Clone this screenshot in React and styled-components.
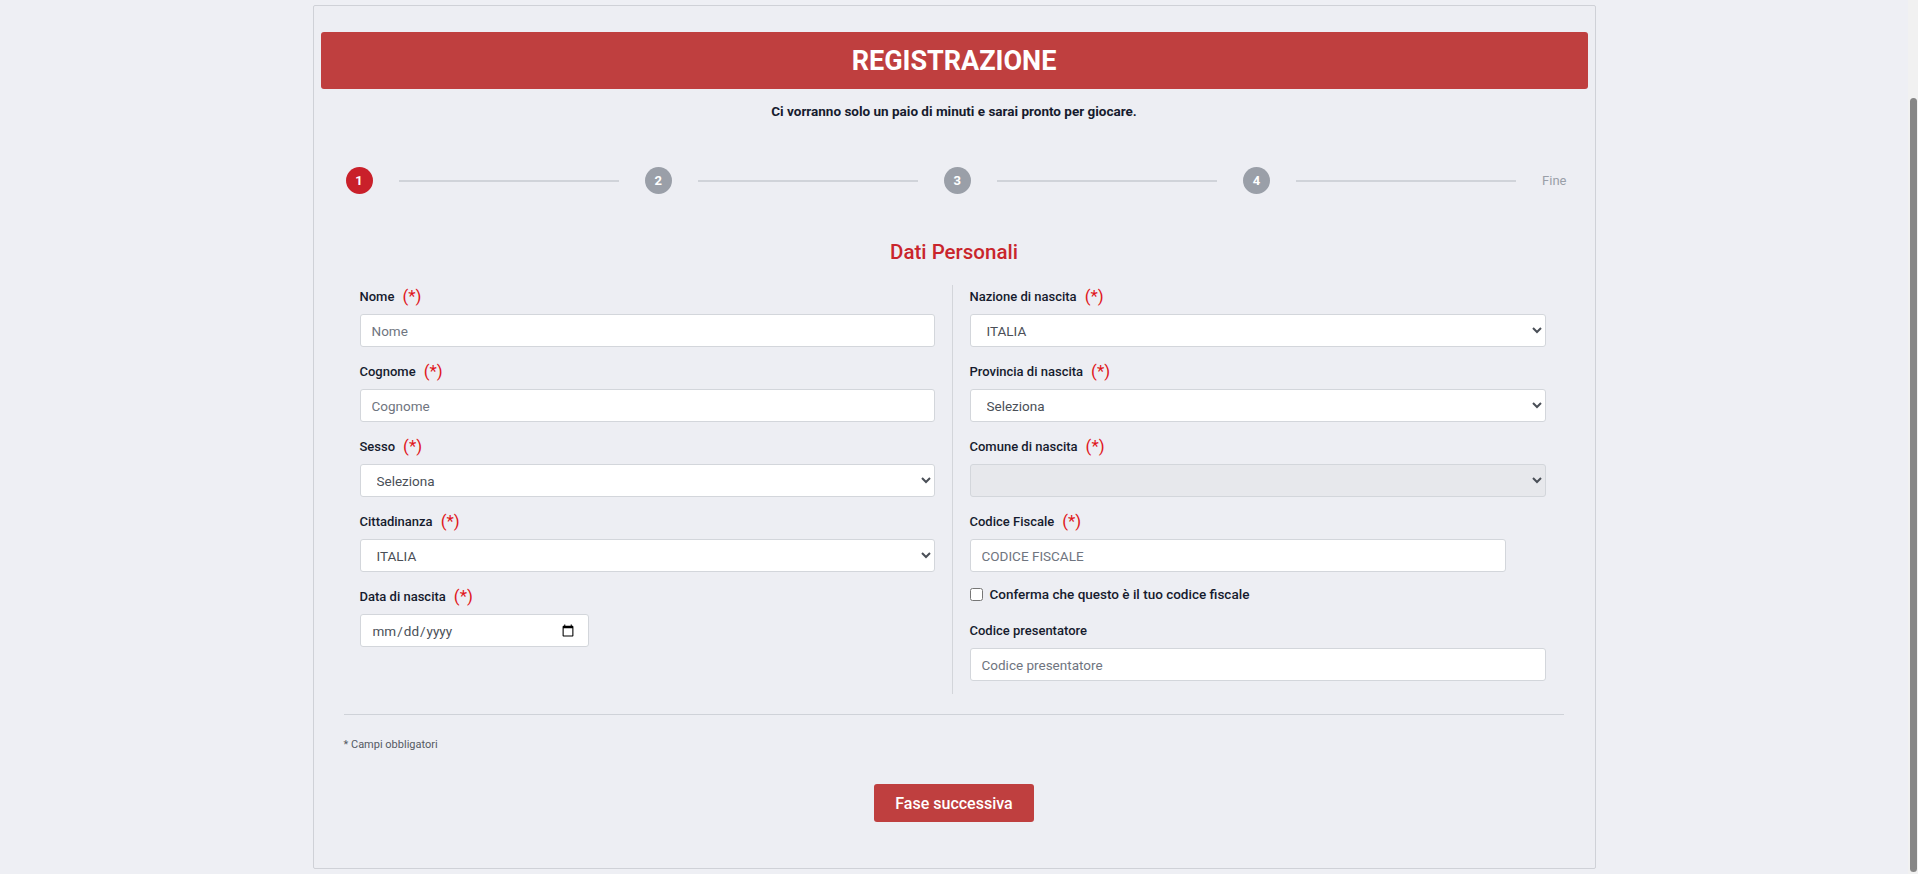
import React from 'react'
import styled, { createGlobalStyle } from 'styled-components'

const GlobalStyle = createGlobalStyle`
  body {
    margin: 0;
    padding-right: 10px;
    background: #eeeff4;
    font-family: Roboto, "Liberation Sans", sans-serif;
    color: #161b2e;
  }
  * {
    box-sizing: border-box;
  }
`

const ScrollTrack = styled.div`
  position: fixed;
  top: 0;
  right: 0;
  width: 10px;
  height: 100vh;
  background: #f1f1f1;
`

const ScrollThumb = styled.div`
  position: absolute;
  top: 98px;
  bottom: 2px;
  left: 2px;
  right: 1px;
  border-radius: 4px;
  background: #868686;
`

const Card = styled.div`
  width: 1283px;
  margin: 5px auto 6px;
  background: #edeef3;
  border: 1px solid #cfd1d7;
  border-radius: 2px;
  padding: 26px 7px 46px;
`

const Header = styled.div`
  height: 57px;
  background: #bf3f3f;
  border-radius: 3px;
  display: flex;
  align-items: center;
  justify-content: center;
  color: #fff;
  font-size: 27px;
  font-weight: 700;
`

const Subtitle = styled.div`
  margin-top: 12px;
  line-height: 20px;
  text-align: center;
  font-size: 13.5px;
  font-weight: 700;
  color: #161b2e;
`

const Steps = styled.div`
  display: flex;
  align-items: center;
  margin: 46px 21px 0 25px;
`

const StepDot = styled.div`
  width: 27px;
  height: 27px;
  border-radius: 50%;
  flex: none;
  display: flex;
  align-items: center;
  justify-content: center;
  background: ${p => (p.$active ? '#c9202a' : '#9a9fa8')};
  color: #fff;
  font-size: 13px;
  font-weight: 700;
`

const StepLine = styled.div`
  flex: 1;
  height: 2px;
  margin: 0 26px;
  background: #d0d3d9;
`

const StepEnd = styled.div`
  font-size: 13px;
  color: #9a9fa8;
`

const SectionTitle = styled.h2`
  margin: 46px 0 0;
  line-height: 24px;
  text-align: center;
  font-size: 20.5px;
  font-weight: 500;
  color: #c9252c;
`

const FormGrid = styled.div`
  display: grid;
  grid-template-columns: 575px 1px 576px;
  column-gap: 17px;
  margin: 21px 0 0 39px;
`

const Column = styled.div`
  padding-bottom: 13px;
`

const Divider = styled.div`
  background: #d3d5da;
`

const Field = styled.div`
  margin-bottom: ${p => (p.$tight ? '0' : '13px')};
`

const Label = styled.label`
  display: flex;
  align-items: center;
  gap: 8px;
  height: 22px;
  margin-bottom: 7px;
  margin-top: ${p => p.$gap || '0'};
  font-size: 13px;
  font-weight: 500;
  color: #161b2e;
`

const Required = styled.span`
  font-size: 17px;
  font-weight: 400;
  color: #e0161b;
`

const Input = styled.input`
  display: block;
  width: ${p => p.$width || '100%'};
  height: 33px;
  padding: 0 11px;
  background: #fff;
  border: 1px solid #d3d6db;
  border-radius: 3px;
  font-family: Roboto, "Liberation Sans", sans-serif;
  font-size: 13.5px;
  color: #4a4f57;

  &::placeholder {
    color: #6f7580;
  }
`

const Select = styled.select`
  display: block;
  width: 100%;
  height: 33px;
  padding: 0 11px 0 12px;
  background: ${p => (p.disabled ? '#e7e8ec' : '#fff')};
  border: 1px solid #d3d6db;
  border-radius: 3px;
  font-family: Roboto, "Liberation Sans", sans-serif;
  font-size: 13.5px;
  color: #4a4f57;
  opacity: 1;
`

const CheckRow = styled.label`
  display: flex;
  align-items: center;
  gap: 7px;
  height: 18px;
  margin-top: 13px;
  font-size: 13.5px;
  font-weight: 500;
  color: #161b2e;

  input {
    margin: 0;
    width: 13px;
    height: 13px;
  }
`

const Separator = styled.hr`
  margin: 20px 24px 0 23px;
  border: 0;
  border-top: 1px solid #cfd2d8;
`

const Note = styled.div`
  margin: 23px 0 0 23px;
  line-height: 14px;
  font-size: 11px;
  color: #555a63;
`

const Actions = styled.div`
  display: flex;
  justify-content: center;
  margin-top: 32px;
`

const Button = styled.button`
  width: 160px;
  height: 38px;
  background: #bf3f3f;
  border: 0;
  border-radius: 3px;
  color: #fff;
  font-family: Roboto, "Liberation Sans", sans-serif;
  font-size: 16px;
  font-weight: 500;
`

function Req({ children, gap }) {
  return (
    <Label $gap={gap}>
      {children}
      <Required>(*)</Required>
    </Label>
  )
}

export default function App() {
  return (
    <>
      <GlobalStyle />
      <Card>
        <Header>REGISTRAZIONE</Header>
        <Subtitle>Ci vorranno solo un paio di minuti e sarai pronto per giocare.</Subtitle>

        <Steps>
          <StepDot $active>1</StepDot>
          <StepLine />
          <StepDot>2</StepDot>
          <StepLine />
          <StepDot>3</StepDot>
          <StepLine />
          <StepDot>4</StepDot>
          <StepLine />
          <StepEnd>Fine</StepEnd>
        </Steps>

        <SectionTitle>Dati Personali</SectionTitle>

        <FormGrid>
          <Column>
            <Field>
              <Req>Nome</Req>
              <Input placeholder="Nome" />
            </Field>
            <Field>
              <Req>Cognome</Req>
              <Input placeholder="Cognome" />
            </Field>
            <Field>
              <Req>Sesso</Req>
              <Select defaultValue="">
                <option value="">Seleziona</option>
                <option value="M">Maschio</option>
                <option value="F">Femmina</option>
              </Select>
            </Field>
            <Field>
              <Req>Cittadinanza</Req>
              <Select defaultValue="IT">
                <option value="IT">ITALIA</option>
              </Select>
            </Field>
            <Field>
              <Req>Data di nascita</Req>
              <Input type="date" $width="229px" />
            </Field>
          </Column>

          <Divider />

          <Column>
            <Field>
              <Req>Nazione di nascita</Req>
              <Select defaultValue="IT">
                <option value="IT">ITALIA</option>
              </Select>
            </Field>
            <Field>
              <Req>Provincia di nascita</Req>
              <Select defaultValue="">
                <option value="">Seleziona</option>
              </Select>
            </Field>
            <Field>
              <Req>Comune di nascita</Req>
              <Select disabled defaultValue="">
                <option value=""></option>
              </Select>
            </Field>
            <Field $tight>
              <Req>Codice Fiscale</Req>
              <Input placeholder="CODICE FISCALE" $width="536px" />
            </Field>
            <CheckRow>
              <input type="checkbox" />
              Conferma che questo è il tuo codice fiscale
            </CheckRow>
            <Field $tight>
              <Label $gap="16px">Codice presentatore</Label>
              <Input placeholder="Codice presentatore" />
            </Field>
          </Column>
        </FormGrid>

        <Separator />
        <Note>* Campi obbligatori</Note>
        <Actions>
          <Button>Fase successiva</Button>
        </Actions>
      </Card>
      <ScrollTrack>
        <ScrollThumb />
      </ScrollTrack>
    </>
  )
}
